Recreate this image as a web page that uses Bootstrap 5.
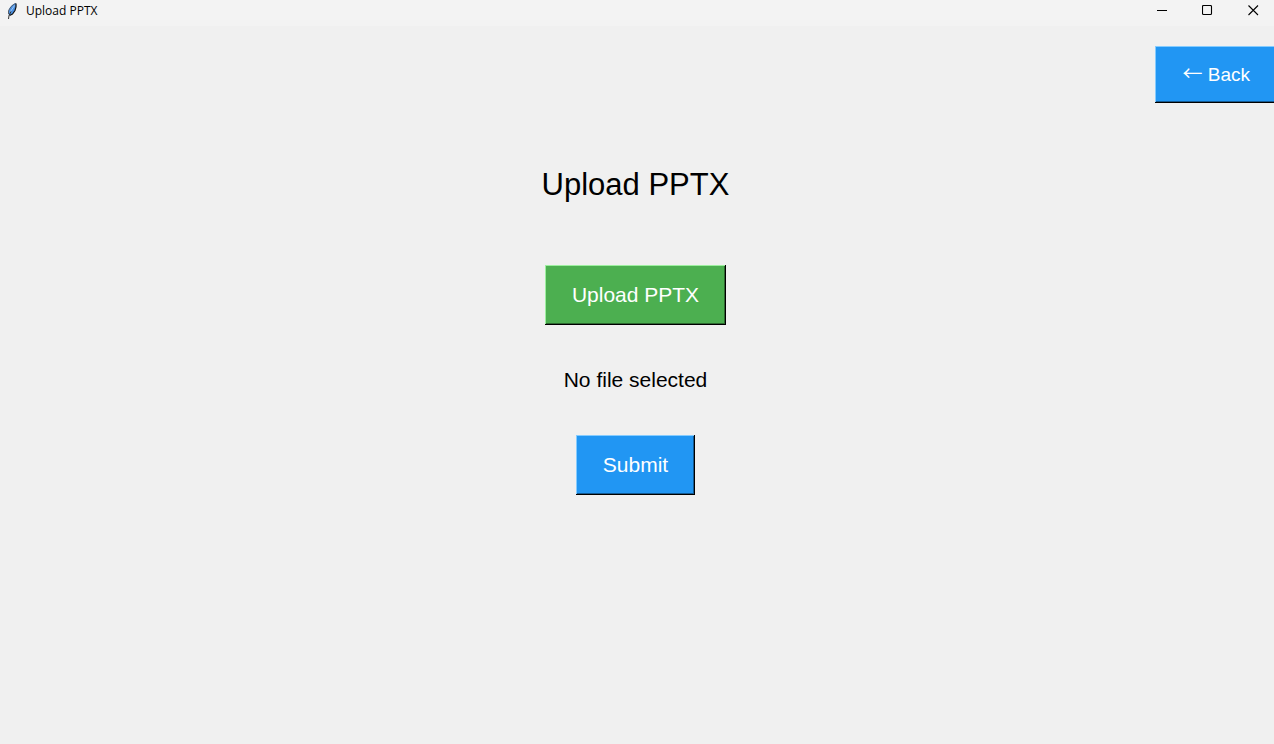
<!DOCTYPE html>
<html lang="en">
<head>
<meta charset="utf-8">
<meta name="viewport" content="width=device-width, initial-scale=1">
<title>Upload PPTX</title>
<link href="https://cdn.jsdelivr.net/npm/bootstrap@5.3.0/dist/css/bootstrap.min.css" rel="stylesheet">
<style>
  body { background: #f0f0f0; color: #000; font-family: "Liberation Sans", Arial, sans-serif; }
  .titlebar { background: #f3f3f3; height: 26px; padding-bottom: 5px; font-family: "Open Sans", "Noto Sans", sans-serif; font-size: 12px; line-height: 20px; }
  .titlebar .app-icon { margin-left: 6px; margin-right: 8px; }
  .caption-btn { width: 46px; height: 21px; border-radius: 0; color: #000; }
  .caption-btn svg { display: block; }
  .controls { margin-right: -2px; }
  .page-title { font-size: 31px; line-height: 36px; margin-bottom: 62px; }
  .status { font-size: 21px; line-height: 24px; margin: 43px 0; }
  .tk-btn { border: 0; border-radius: 0; color: #fff; font-size: 21px; line-height: 24px; padding: 18px 27px; }
  .tk-btn:hover { color: #fff; }
  .tk-blue, .tk-blue:hover { background: #2196f3; box-shadow: inset -1px -1px #000, inset 1px 1px #85ccff, inset -2px -2px #145a92; }
  .tk-green, .tk-green:hover { background: #4caf50; box-shadow: inset -1px -1px #000, inset 1px 1px #9df0a0, inset -2px -2px #2e6930; }
  .back-btn { font-size: 19px; line-height: 21px; margin-right: -3px; }
  .back-arrow { font-family: "Noto Sans CJK SC", sans-serif; font-size: 20px; line-height: 0; }
  .back-row { padding-top: 20px; }
  .content { padding-top: 64px; padding-right: 3px; }
</style>
</head>
<body class="overflow-hidden">
<header class="titlebar d-flex align-items-center">
  <svg class="app-icon" width="12" height="18" viewBox="0 0 12 18" aria-hidden="true">
    <path d="M10 1C6.500 2 3 5.500 2.500 9L2.500 12.500L4 13.500L6.500 12L9 8.500L10.200 4Z" fill="#4a90e2"/>
    <path d="M9.500 1.500C6.500 2.500 3.500 6 2.500 9V12" fill="none" stroke="#555f6b" stroke-width="1"/>
    <path d="M10 1.500L10 5L9 8.500L6.500 12L3.500 13.500" fill="none" stroke="#111" stroke-width="1.200"/>
    <path d="M8.500 3.500L4.500 9.500" stroke="#9cc6f5" stroke-width="1"/>
    <path d="M5 9.500L3 13.500L2.500 17" fill="none" stroke="#333" stroke-width="1"/>
  </svg>
  <span>Upload PPTX</span>
  <div class="controls d-flex ms-auto">
    <button type="button" class="caption-btn btn p-0 d-flex align-items-center justify-content-center" aria-label="Minimize"><svg width="11" height="11" viewBox="0 0 11 11"><path d="M1 5.500H11" stroke="#000"/></svg></button>
    <button type="button" class="caption-btn btn p-0 d-flex align-items-center justify-content-center" aria-label="Maximize"><svg width="11" height="11" viewBox="0 0 11 11"><rect x=".500" y=".500" width="9" height="9" rx="1" fill="none" stroke="#000" stroke-width="1.100"/></svg></button>
    <button type="button" class="caption-btn btn p-0 d-flex align-items-center justify-content-center" aria-label="Close"><svg width="11" height="11" viewBox="0 0 11 11"><path d="M.500 .500L10 10M10 .500L.500 10" stroke="#000" stroke-width="1.100"/></svg></button>
  </div>
</header>
<div class="back-row d-flex justify-content-end">
  <button type="button" class="back-btn btn tk-btn tk-blue"><span class="back-arrow">←</span> Back</button>
</div>
<main class="content d-flex flex-column align-items-center">
  <h1 class="page-title fw-normal">Upload PPTX</h1>
  <button type="button" class="btn tk-btn tk-green">Upload PPTX</button>
  <p class="status">No file selected</p>
  <button type="submit" class="btn tk-btn tk-blue">Submit</button>
</main>
<script src="https://cdn.jsdelivr.net/npm/bootstrap@5.3.0/dist/js/bootstrap.bundle.min.js"></script>
</body>
</html>
